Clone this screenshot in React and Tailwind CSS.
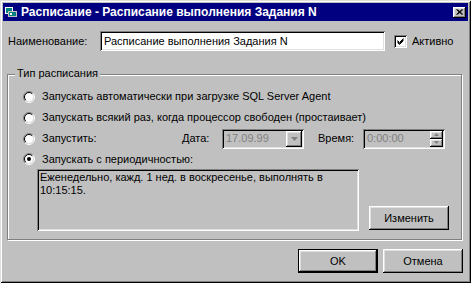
import React from 'react';

const raised =
  'shadow-[inset_-1px_-1px_#000,inset_1px_1px_#fff,inset_-2px_-2px_#808080,inset_2px_2px_#dfdfdf]';
const sunken =
  'shadow-[inset_1px_1px_#808080,inset_-1px_-1px_#fff,inset_2px_2px_#000,inset_-2px_-2px_#dfdfdf]';

function Radio({ checked }) {
  return (
    <svg width="12" height="12" viewBox="0 0 12 12" className="shrink-0">
      <circle cx="6" cy="6" r="4.5" fill="#fff" />
      <path d="M2.1 9.9 A5.5 5.5 0 0 1 9.9 2.1" fill="none" stroke="#808080" />
      <path d="M9.9 2.1 A5.5 5.5 0 0 1 2.1 9.9" fill="none" stroke="#fff" />
      <path d="M2.8 9.2 A4.5 4.5 0 0 1 9.2 2.8" fill="none" stroke="#000" />
      <path d="M9.2 2.8 A4.5 4.5 0 0 1 2.8 9.2" fill="none" stroke="#dfdfdf" />
      {checked && <circle cx="6" cy="6" r="2" fill="#000" />}
    </svg>
  );
}

function Row({ checked, children, className = 'h-[21px]' }) {
  return (
    <div className={`flex items-center ${className}`}>
      <Radio checked={checked} />
      {children}
    </div>
  );
}

function SmallButton({ children }) {
  return (
    <div className={`w-[13px] h-[8px] bg-[#c0c0c0] flex items-center justify-center ${raised}`}>
      {children}
    </div>
  );
}

export default function App() {
  return (
    <div
      className="w-[471px] h-[283px] bg-[#c0c0c0] p-[3px] flex flex-col text-[11px] leading-[13px] text-black font-['Liberation_Sans',Arial,sans-serif] shadow-[inset_1px_1px_#dfdfdf,inset_-1px_-1px_#000,inset_2px_2px_#fff,inset_-2px_-2px_#808080] overflow-hidden"
    >
      {/* title bar */}
      <div className="h-[18px] bg-[#000080] flex items-center pl-[2px] pr-[2px]">
        <svg width="12" height="12" viewBox="0 0 12 12" className="shrink-0">
          <rect x="0" y="1" width="8" height="7" fill="#fff" />
          <rect x="1" y="2" width="6" height="5" fill="#008080" />
          <rect x="3" y="5" width="9" height="6" fill="#c0c0c0" />
          <rect x="4" y="6" width="7" height="4" fill="#008080" />
          <rect x="5" y="7" width="2" height="2" fill="#fff" />
        </svg>
        <span className="ml-[4px] text-white font-bold text-[12px] whitespace-nowrap">
          Расписание - Расписание выполнения Задания N
        </span>
        <div className={`ml-auto w-[13px] h-[11px] bg-[#c0c0c0] flex items-center justify-center ${raised}`}>
          <svg width="7" height="6" viewBox="0 0 7 6">
            <path d="M0.5 0.5 L6 5.5 M1.5 0.5 L7 5.5 M6 0.5 L0.5 5.5 M7 0.5 L1.5 5.5" stroke="#000" strokeWidth="1" />
          </svg>
        </div>
      </div>

      <div className="flex flex-col px-[5px]">
        {/* name row */}
        <div className="mt-[10px] h-[20px] flex items-center">
          <span className="w-[92px]">Наименование:</span>
          <div className={`w-[285px] h-[20px] bg-white pl-[4px] flex items-center ${sunken}`}>
            Расписание выполнения Задания N
          </div>
          <div className={`ml-[9px] w-[13px] h-[13px] bg-white flex items-center justify-center ${sunken}`}>
            <svg width="7" height="7" viewBox="0 0 7 7">
              <path d="M0.5 2.5 L2.5 4.5 L6.5 0.5 M0.5 3.5 L2.5 5.5 L6.5 1.5 M0.5 4.5 L2.5 6.5 L6.5 2.5" stroke="#000" fill="none" />
            </svg>
          </div>
          <span className="ml-[5px]">Активно</span>
        </div>

        {/* schedule group */}
        <div className="mt-[23px] -ml-[1px] w-[455px] h-[166px] border border-[#808080] shadow-[inset_1px_1px_#fff,1px_1px_#fff] flex flex-col">
          <span className="-mt-[8px] ml-[7px] px-[2px] w-fit bg-[#c0c0c0]">Тип расписания</span>

          <div className="mt-[6px] pl-[15px] flex flex-col">
            <Row>
              <span className="ml-[7px]">Запускать автоматически при загрузке SQL Server Agent</span>
            </Row>
            <Row>
              <span className="ml-[7px]">Запускать всякий раз, когда процессор свободен (простаивает)</span>
            </Row>
            <Row>
              <span className="ml-[7px] w-[140px]">Запустить:</span>
              <span className="w-[40px]">Дата:</span>
              <div className={`w-[82px] h-[20px] flex items-center pl-[4px] pr-[2px] ${sunken}`}>
                <span className="text-[#808080]">17.09.99</span>
                <div className={`ml-auto w-[16px] h-[16px] bg-[#c0c0c0] flex items-center justify-center ${raised}`}>
                  <svg width="7" height="4" viewBox="0 0 7 4">
                    <path d="M0 0 H7 L3.5 4 Z" fill="#808080" />
                  </svg>
                </div>
              </div>
              <span className="ml-[14px] w-[45px]">Время:</span>
              <div className={`w-[82px] h-[20px] flex items-center pl-[4px] pr-[2px] ${sunken}`}>
                <span className="text-[#808080]">0:00:00</span>
                <div className="ml-auto flex flex-col">
                  <SmallButton>
                    <svg width="5" height="3" viewBox="0 0 5 3">
                      <path d="M0 3 H5 L2.5 0 Z" fill="#808080" />
                    </svg>
                  </SmallButton>
                  <SmallButton>
                    <svg width="5" height="3" viewBox="0 0 5 3">
                      <path d="M0 0 H5 L2.5 3 Z" fill="#808080" />
                    </svg>
                  </SmallButton>
                </div>
              </div>
            </Row>
            <Row checked className="h-[20px]">
              <span className="ml-[7px]">Запускать с периодичностью:</span>
            </Row>
          </div>

          <div className="flex items-end">
            <div className={`ml-[29px] w-[322px] h-[62px] pl-[3px] pt-[2px] whitespace-nowrap ${sunken}`}>
              Еженедельно, кажд. 1 нед. в воскресенье, выполнять в
              <br />
              10:15:15.
            </div>
            <button className={`ml-[10px] mb-[1px] w-[80px] h-[24px] bg-[#c0c0c0] ${raised}`}>
              Изменить
            </button>
          </div>
        </div>

        {/* dialog buttons */}
        <div className="mt-[9px] ml-[290px] flex gap-[5px]">
          <div className="w-[80px] h-[24px] border border-black">
            <button className={`w-full h-full bg-[#c0c0c0] ${raised}`}>OK</button>
          </div>
          <button className={`w-[80px] h-[24px] bg-[#c0c0c0] ${raised}`}>Отмена</button>
        </div>
      </div>
    </div>
  );
}
